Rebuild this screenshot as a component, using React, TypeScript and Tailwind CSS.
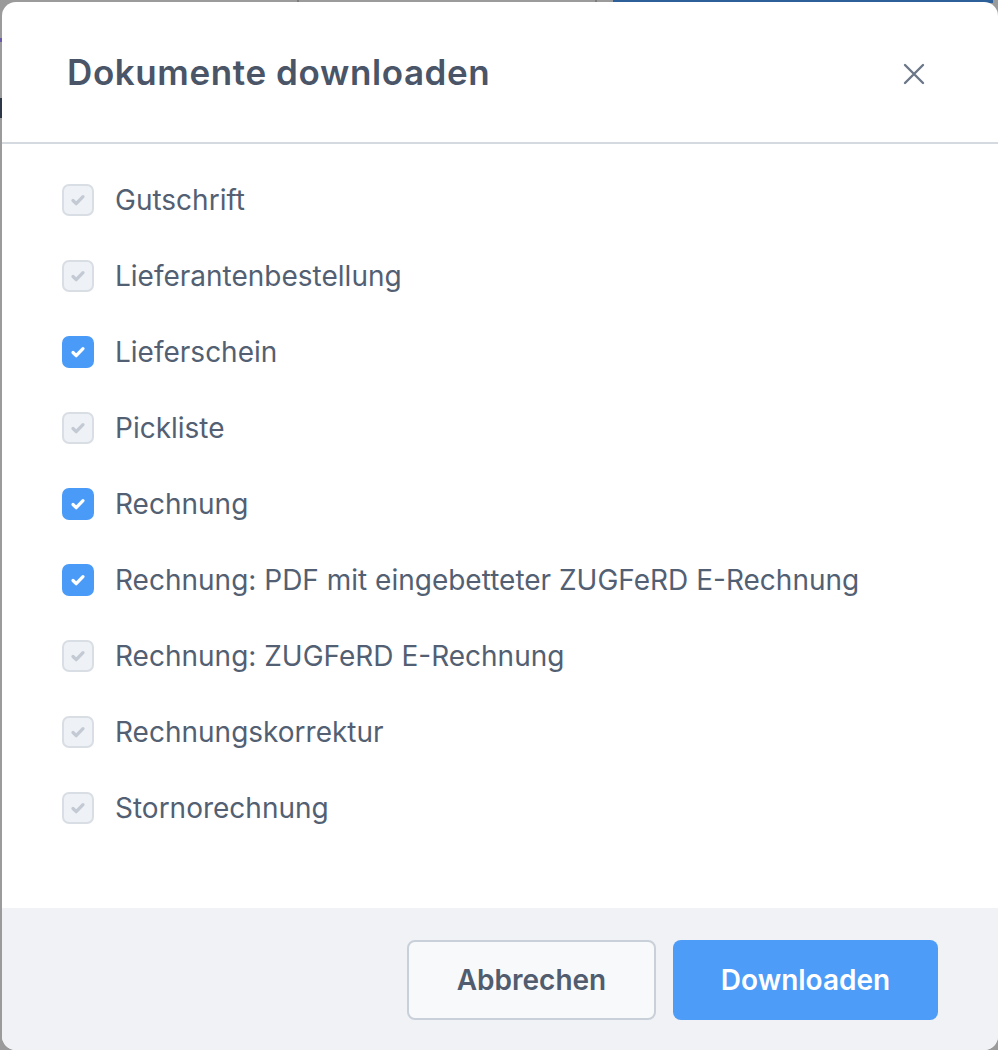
import { useState } from "react";

type Doc = { label: string; checked: boolean; disabled: boolean };

const DOCS: Doc[] = [
  { label: "Gutschrift", checked: true, disabled: true },
  { label: "Lieferantenbestellung", checked: true, disabled: true },
  { label: "Lieferschein", checked: true, disabled: false },
  { label: "Pickliste", checked: true, disabled: true },
  { label: "Rechnung", checked: true, disabled: false },
  { label: "Rechnung: PDF mit eingebetteter ZUGFeRD E-Rechnung", checked: true, disabled: false },
  { label: "Rechnung: ZUGFeRD E-Rechnung", checked: true, disabled: true },
  { label: "Rechnungskorrektur", checked: true, disabled: true },
  { label: "Stornorechnung", checked: true, disabled: true },
];

function Check({ color }: { color: string }) {
  return (
    <svg width="20" height="20" viewBox="0 0 20 20" fill="none">
      <path d="M5 10.5l3.2 3.2L15 6.6" stroke={color} strokeWidth="3.2" strokeLinecap="round" strokeLinejoin="round" />
    </svg>
  );
}

function Box({ checked, disabled, onClick }: { checked: boolean; disabled: boolean; onClick: () => void }) {
  if (disabled) {
    return (
      <span className="w-8 h-8 shrink-0 rounded-[7px] border-2 border-[#d9dee5] bg-[#eef1f5] flex items-center justify-center">
        <Check color="#c3cad4" />
      </span>
    );
  }
  return (
    <button
      onClick={onClick}
      className={
        checked
          ? "w-8 h-8 shrink-0 rounded-[7px] bg-[#4a9bf8] flex items-center justify-center"
          : "w-8 h-8 shrink-0 rounded-[7px] border-2 border-[#cbd2dc] bg-white flex items-center justify-center"
      }
    >
      {checked && <Check color="#ffffff" />}
    </button>
  );
}

export default function App() {
  const [docs, setDocs] = useState(DOCS);
  const toggle = (i: number) =>
    setDocs((d) => d.map((x, j) => (j === i ? { ...x, checked: !x.checked } : x)));

  return (
    <div className="relative w-[998px] h-[1050px] overflow-hidden bg-[#9b9b9b] font-['Inter','Liberation_Sans',sans-serif]">
      {/* page behind the overlay */}
      <div className="absolute top-0 left-[613px] w-[380px] h-[3px] bg-[#2d5f98]" />
      <div className="absolute top-0 left-[297px] w-[2px] h-[3px] bg-[#7d7d7d]" />
      <div className="absolute top-0 left-[595px] w-[2px] h-[3px] bg-[#7d7d7d]" />
      <div className="absolute top-[38px] left-0 w-[2px] h-[4px] bg-[#6b5aa8]" />
      <div className="absolute top-[98px] left-0 w-[2px] h-[20px] bg-[#2e3747]" />

      <div className="relative ml-[2px] mt-[2px] w-[996px] h-[1048px] bg-white rounded-[14px] overflow-hidden flex flex-col">
        <div className="h-[142px] shrink-0 flex items-center justify-between pl-[65px] pr-[72px] border-b-2 border-[#d5dae0]">
          <h2 className="text-[35px] font-semibold text-[#4a5568] tracking-[0.6px] leading-none">Dokumente downloaden</h2>
          <button className="w-6 h-6 mt-[4px] flex items-center justify-center text-[#6b7788]">
            <svg width="22" height="22" viewBox="0 0 22 22" fill="none">
              <path d="M2 2l18 18M20 2L2 20" stroke="currentColor" strokeWidth="2.4" strokeLinecap="round" />
            </svg>
          </button>
        </div>

        <div className="flex-1 pt-[40px] pl-[60px] flex flex-col gap-[44px]">
          {docs.map((d, i) => (
            <label key={d.label} className="flex items-center gap-[21px] h-8">
              <Box checked={d.checked} disabled={d.disabled} onClick={() => toggle(i)} />
              <span className="text-[28px] text-[#535f72] leading-none">{d.label}</span>
            </label>
          ))}
        </div>

        <div className="h-[142px] shrink-0 bg-[#f0f2f5] flex justify-end items-start pt-[32px] pr-[60px] gap-[17px]">
          <button className="w-[249px] h-[80px] rounded-[8px] border-2 border-[#c9d0da] bg-[#f8f9fb] text-[28px] font-semibold text-[#515d6f]">
            Abbrechen
          </button>
          <button className="w-[265px] h-[80px] rounded-[8px] bg-[#4c9cf8] text-[28px] font-semibold text-white">
            Downloaden
          </button>
        </div>
      </div>
    </div>
  );
}
